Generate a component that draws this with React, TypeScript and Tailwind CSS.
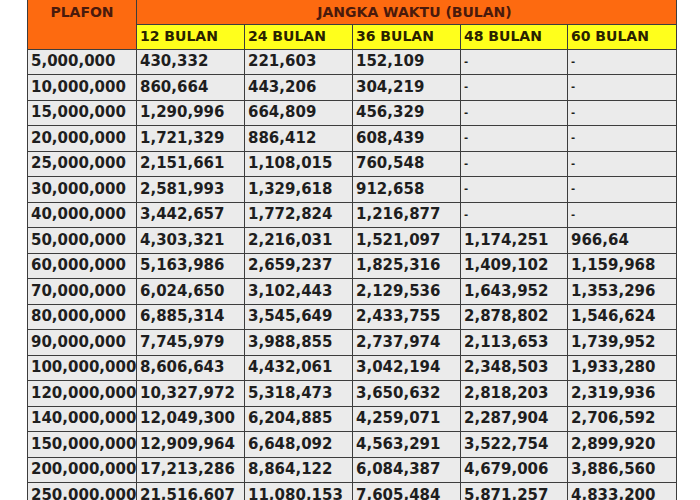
import React from 'react';

type Row = [string, string, string, string, string, string];

const rows: Row[] = [
  ['5,000,000', '430,332', '221,603', '152,109', '-', '-'],
  ['10,000,000', '860,664', '443,206', '304,219', '-', '-'],
  ['15,000,000', '1,290,996', '664,809', '456,329', '-', '-'],
  ['20,000,000', '1,721,329', '886,412', '608,439', '-', '-'],
  ['25,000,000', '2,151,661', '1,108,015', '760,548', '-', '-'],
  ['30,000,000', '2,581,993', '1,329,618', '912,658', '-', '-'],
  ['40,000,000', '3,442,657', '1,772,824', '1,216,877', '-', '-'],
  ['50,000,000', '4,303,321', '2,216,031', '1,521,097', '1,174,251', '966,64'],
  ['60,000,000', '5,163,986', '2,659,237', '1,825,316', '1,409,102', '1,159,968'],
  ['70,000,000', '6,024,650', '3,102,443', '2,129,536', '1,643,952', '1,353,296'],
  ['80,000,000', '6,885,314', '3,545,649', '2,433,755', '2,878,802', '1,546,624'],
  ['90,000,000', '7,745,979', '3,988,855', '2,737,974', '2,113,653', '1,739,952'],
  ['100,000,000', '8,606,643', '4,432,061', '3,042,194', '2,348,503', '1,933,280'],
  ['120,000,000', '10,327,972', '5,318,473', '3,650,632', '2,818,203', '2,319,936'],
  ['140,000,000', '12,049,300', '6,204,885', '4,259,071', '2,287,904', '2,706,592'],
  ['150,000,000', '12,909,964', '6,648,092', '4,563,291', '3,522,754', '2,899,920'],
  ['200,000,000', '17,213,286', '8,864,122', '6,084,387', '4,679,006', '3,886,560'],
  ['250,000,000', '21,516,607', '11,080,153', '7,605,484', '5,871,257', '4,833,200'],
];

const tenors = ['12 BULAN', '24 BULAN', '36 BULAN', '48 BULAN', '60 BULAN'];

export default function App() {
  return (
    <div className="h-[500px] w-[700px] overflow-hidden bg-white font-['DejaVu_Sans',sans-serif]">
      <table className="ml-[27px] w-[649px] table-fixed border-collapse">
        <colgroup>
          <col className="w-[109px]" />
          <col className="w-[108px]" />
          <col className="w-[108px]" />
          <col className="w-[108px]" />
          <col className="w-[107px]" />
          <col className="w-[109px]" />
        </colgroup>
        <thead>
          <tr className="h-[24px]">
            <th
              rowSpan={2}
              className="border-x-[1.5px] border-b-[1.5px] border-[#3d3d3d] bg-[#fd6a10] pt-[2px] align-top text-[14px] font-bold text-[#4a1a0c]"
            >
              PLAFON
            </th>
            <th
              colSpan={5}
              className="border-x-[1.5px] border-[#3d3d3d] bg-[#fd6a10] pl-[16px] text-center text-[14px] font-bold leading-none text-[#4a1a0c]"
            >
              JANGKA WAKTU (BULAN)
            </th>
          </tr>
          <tr className="h-[25px]">
            {tenors.map((t) => (
              <th
                key={t}
                className="border-[1.5px] border-[#3d3d3d] bg-[#ffff1c] pl-[3px] text-left text-[14px] font-bold text-[#2a2200]"
              >
                {t}
              </th>
            ))}
          </tr>
        </thead>
        <tbody>
          {rows.map((r) => (
            <tr key={r[0]} className="bg-[#ebebeb]">
              {r.map((v, i) => (
                <td
                  key={i}
                  className={`h-[25.5px] overflow-visible whitespace-nowrap border-[1.5px] border-[#3d3d3d] p-0 pl-[3px] font-bold leading-none text-[#1e1e1e] ${
                    v === '-' ? 'text-[10px]' : 'text-[15px]'
                  }`}
                >
                  {v}
                </td>
              ))}
            </tr>
          ))}
        </tbody>
      </table>
    </div>
  );
}
